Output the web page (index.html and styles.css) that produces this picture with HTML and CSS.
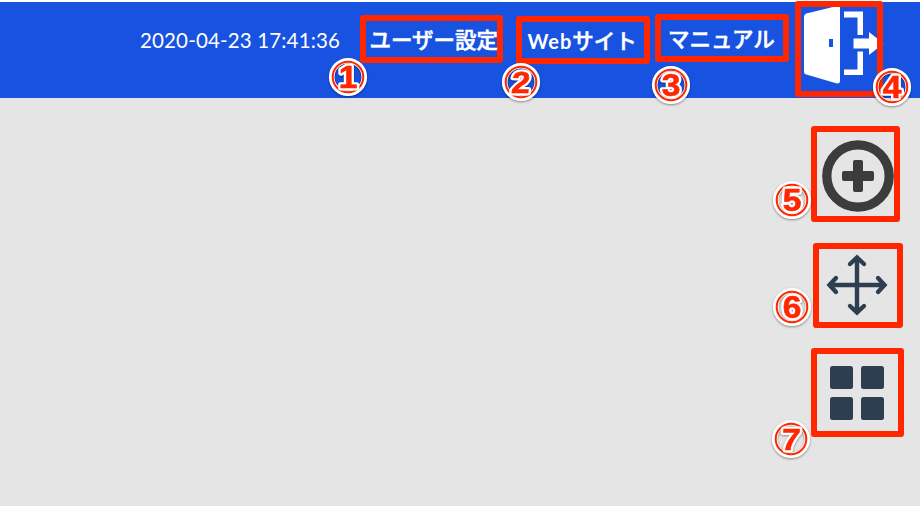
FILE: index.html
```html
<!DOCTYPE html>
<html lang="ja">
<head>
<meta charset="utf-8">
<title>ユーザー設定</title>
<link rel="stylesheet" href="styles.css">
</head>
<body>
<div class="app">
  <header class="topbar">
    <time class="clock">2020-04-23 17:41:36</time>
    <a class="frame user">ユーザー設定<svg class="badge" viewBox="-20 -20 40 40"><circle class="rim" r="16.3"/><circle class="ring" r="15.3"/><text class="halo" transform="scale(1.1 1)" y="11">1</text><text transform="scale(1.1 1)" y="11">1</text></svg></a>
    <a class="frame web"><span class="latin">Web</span>サイト<svg class="badge" viewBox="-20 -20 40 40"><circle class="rim" r="16.3"/><circle class="ring" r="15.3"/><text class="halo" transform="scale(1.1 1) skewX(-4)" y="11">2</text><text transform="scale(1.1 1) skewX(-4)" y="11">2</text></svg></a>
    <a class="frame manual">マニュアル<svg class="badge" viewBox="-20 -20 40 40"><circle class="rim" r="16.3"/><circle class="ring" r="15.3"/><text class="halo" transform="scale(1.1 1)" y="11">3</text><text transform="scale(1.1 1)" y="11">3</text></svg></a>
    <a class="frame exit">
      <svg class="door" viewBox="0 0 82 84"><path fill="#fff" d="M0 12Q0 9.5 2.3 8.600L33 1Q36 .5 36 3V76Q36 79 33 78.500L2.300 69.500Q0 69 0 67ZM25 34V42H29V34ZM40 6.500H59V30H53.500V12.500H40ZM40 70H59V46.500H53.500V64.500H40ZM49.500 33.500H65V27L79.500 38.500L65 50V43.500H49.500Z" fill-rule="evenodd"/></svg>
      <svg class="badge" viewBox="-20 -20 40 40"><circle class="rim" r="16.3"/><circle class="ring" r="15.3"/><text class="halo" transform="scale(1.1 1)" y="11">4</text><text transform="scale(1.1 1)" y="11">4</text></svg>
    </a>
  </header>
  <main class="tools">
    <div class="frame add">
      <svg class="plus" viewBox="0 0 72 72"><circle cx="36" cy="36" r="31.200" fill="none" stroke="#3c3c3c" stroke-width="9.300"/><path fill="#3c3c3c" d="M33 20h6q2 0 2 2v9h9q2 0 2 2v6q0 2-2 2h-9v9q0 2-2 2h-6q-2 0-2-2v-9h-9q-2 0-2-2v-6q0-2 2-2h9v-9q0-2 2-2Z"/></svg>
      <svg class="badge" viewBox="-20 -20 40 40"><circle class="rim" r="16.3"/><circle class="ring" r="15.3"/><text class="halo" transform="scale(1.1 1)" y="11">5</text><text transform="scale(1.1 1)" y="11">5</text></svg>
    </div>
    <div class="frame move">
      <svg class="arrows" viewBox="0 0 62 62"><path fill="none" stroke="#2c3e50" stroke-width="4.400" stroke-linecap="round" stroke-linejoin="miter" d="M31 4V58M4 31H58M24 10L31 3.500L38 10M24 52L31 58.500L38 52M10 24L3.500 31L10 38M52 24L58.500 31L52 38"/></svg>
      <svg class="badge" viewBox="-20 -20 40 40"><circle class="rim" r="16.3"/><circle class="ring" r="15.3"/><text class="halo" transform="scale(1.1 1)" y="11">6</text><text transform="scale(1.1 1)" y="11">6</text></svg>
    </div>
    <div class="frame apps">
      <div class="grid"><i></i><i></i><i></i><i></i></div>
      <svg class="badge" viewBox="-20 -20 40 40"><circle class="rim" r="16.3"/><circle class="ring" r="15.3"/><text class="halo" transform="scale(1.1 1) skewX(-4)" y="11">7</text><text transform="scale(1.1 1) skewX(-4)" y="11">7</text></svg>
    </div>
  </main>
</div>
</body>
</html>
```

FILE: styles.css
```css
* { box-sizing: border-box; }
body { margin: 0; background: #fff; overflow: hidden; }
.app {
  width: 920px;
  height: 506px;
  padding-top: 2px;
  display: flex;
  flex-direction: column;
}
.topbar {
  height: 96px;
  flex: none;
  background: #1852e0;
  color: #fff;
  display: flex;
  align-items: flex-start;
}
.clock {
  width: 219.5px;
  padding-left: 140px;
  box-sizing: content-box;
  font: 400 20.5px/28px Lato, sans-serif;
  letter-spacing: 0.15px;
  margin-top: 24px;
  white-space: nowrap;
}
.frame {
  position: relative;
  flex: none;
  border: 6px solid #ff2600;
  border-radius: 3px;
  font: 500 21.5px/36px "Noto Sans CJK JP", sans-serif;
  -webkit-text-stroke: 0.5px #fff;
  white-space: nowrap;
}
.user { width: 143.5px; height: 48px; margin-top: 13px; padding-left: 4px; }
.web { width: 133.5px; height: 48px; margin: 14px 0 0 13px; padding-left: 5.5px; }
.latin { font: 700 20px/34px Lato, sans-serif; letter-spacing: 1px; -webkit-text-stroke: 0; }
.manual { width: 134px; height: 48px; margin: 12px 0 0 5.5px; padding-left: 7px; }
.exit { width: 88px; height: 96px; margin: -1px 0 0 6px; border-color: transparent; }
.exit::after {
  content: "";
  position: absolute;
  inset: -6px;
  border: 6px solid #ff2600;
  border-radius: 3px;
}
.door { display: block; width: 82px; height: 84px; margin: -2.500px 0 0 3px; }
.tools {
  flex: 1;
  background: #e5e5e5;
  display: flex;
  flex-direction: column;
  align-items: flex-start;
  padding: 28px 0 0 811px;
}
.add { width: 89px; height: 96px; }
.move { width: 90px; height: 85px; margin: 21px 0 0 2px; }
.apps { width: 93px; height: 89px; margin-top: 20px; }
.plus { display: block; width: 72px; height: 72px; margin: 8px 0 0 5px; }
.arrows { display: block; width: 62px; height: 62px; margin: 5px 0 0 7px; }
.grid {
  display: grid;
  grid-template-columns: 23px 23px;
  grid-auto-rows: 23px;
  gap: 8px;
  margin: 12px 0 0 13px;
}
.grid i { background: #2c3e50; border-radius: 2.500px; }
.badge {
  position: absolute;
  z-index: 1;
  width: 40px;
  height: 40px;
  overflow: visible;
  -webkit-text-stroke: 0;
  filter: drop-shadow(0 1px 1px rgba(0, 0, 0, 0.4));
}
.rim { fill: none; stroke: #fff; stroke-width: 5.600px; }
.ring { fill: none; stroke: #ff2600; stroke-width: 2px; }
.badge text {
  font: 700 30.5px "Liberation Sans", sans-serif;
  text-anchor: middle;
  fill: #ff2600;
  stroke: #ff2600;
  stroke-width: 0.6px;
}
.badge .halo { fill: #fff; stroke: #fff; stroke-width: 5px; stroke-linejoin: round; }
.user .badge { left: -38px; top: 36px; }
.web .badge { left: -21px; top: 40px; }
.manual .badge { left: -10.500px; top: 44.500px; }
.exit .badge { left: 70.500px; top: 60px; }
.add .badge { left: -45.500px; top: 48px; }
.move .badge { left: -47.500px; top: 38px; }
.apps .badge { left: -46.500px; top: 64.500px; }
```
